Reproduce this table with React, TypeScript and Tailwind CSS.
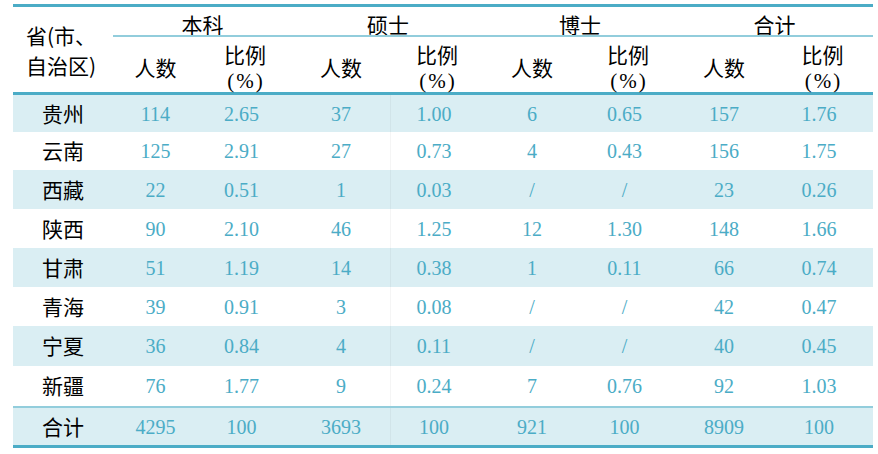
import React from "react";

const cols = "grid grid-cols-[100px_85px_94px_98px_94px_96px_96px_96px_101px]";

const rows: { name: string; v: string[]; h: string; shade: boolean }[] = [
  { name: "贵州", v: ["114", "2.65", "37", "1.00", "6", "0.65", "157", "1.76"], h: "h-[37px]", shade: true },
  { name: "云南", v: ["125", "2.91", "27", "0.73", "4", "0.43", "156", "1.75"], h: "h-[38px]", shade: false },
  { name: "西藏", v: ["22", "0.51", "1", "0.03", "/", "/", "23", "0.26"], h: "h-[39px]", shade: true },
  { name: "陕西", v: ["90", "2.10", "46", "1.25", "12", "1.30", "148", "1.66"], h: "h-[39px]", shade: false },
  { name: "甘肃", v: ["51", "1.19", "14", "0.38", "1", "0.11", "66", "0.74"], h: "h-[39px]", shade: true },
  { name: "青海", v: ["39", "0.91", "3", "0.08", "/", "/", "42", "0.47"], h: "h-[39px]", shade: false },
  { name: "宁夏", v: ["36", "0.84", "4", "0.11", "/", "/", "40", "0.45"], h: "h-[40px]", shade: true },
  { name: "新疆", v: ["76", "1.77", "9", "0.24", "7", "0.76", "92", "1.03"], h: "h-[40px]", shade: false },
];

const total = ["4295", "100", "3693", "100", "921", "100", "8909", "100"];

const cjk = "font-['Noto_Sans_CJK_SC',sans-serif]";
const num = "font-['Liberation_Serif',serif]";

function NumCell({ val, idx }: { val: string; idx: number }) {
  const ratio = idx % 2 === 1;
  const sep = idx === 3;
  return (
    <div
      className={`flex items-center justify-center text-[20px] text-[#4bacc6] ${num} ${
        ratio ? "pr-[7px]" : ""
      } ${sep ? "border-l border-l-black/[0.04]" : ""}`}
    >
      {val}
    </div>
  );
}

export default function App() {
  return (
    <div className="w-[878px] h-[454px] bg-white pt-[4px] pl-[13px]">
      <div className="w-[860px]">
        {/* header */}
        <div className={`${cols} grid-rows-[28px_2px_55px] border-t-[3px] border-t-[#4bacc6] border-b-[3px] border-b-[#4bacc6] text-black`}>
          <div className={`row-span-3 flex flex-col justify-center pl-[13px] pt-[1px] text-[21px] leading-[30px] ${cjk}`}>
            <span>省(市、</span>
            <span>自治区)</span>
          </div>
          {["本科", "硕士", "博士", "合计"].map((g) => (
            <div key={g} className={`col-span-2 flex items-center justify-center pt-[6px] text-[21px] leading-[22px] ${cjk}`}>
              {g}
            </div>
          ))}
          <div className="col-start-2 col-span-8 bg-[#92cddc]" />
          {[0, 1, 2, 3].map((i) => (
            <React.Fragment key={i}>
              <div className={`col-start-auto flex items-center justify-center pt-[7px] text-[21px] ${cjk}`}>
                人数
              </div>
              <div className="flex flex-col items-center justify-center pt-[7px] leading-[27px]">
                <span className={`text-[21px] ${cjk}`}>比例</span>
                <span className={`text-[21px] tracking-[2px] pl-[2px] ${num}`}>(%)</span>
              </div>
            </React.Fragment>
          ))}
        </div>
        {/* body */}
        {rows.map((r) => (
          <div key={r.name} className={`${cols} ${r.h} ${r.shade ? "bg-[#daeef3]" : "bg-white"}`}>
            <div className={`flex items-center justify-center text-[21px] text-black ${cjk}`}>{r.name}</div>
            {r.v.map((val, i) => (
              <NumCell key={i} val={val} idx={i} />
            ))}
          </div>
        ))}
        {/* total */}
        <div className={`${cols} h-[42px] bg-[#daeef3] border-t-2 border-t-[#92cddc] border-b-[3px] border-b-[#4bacc6]`}>
          <div className={`flex items-center justify-center text-[21px] text-black ${cjk}`}>合计</div>
          {total.map((val, i) => (
            <NumCell key={i} val={val} idx={i} />
          ))}
        </div>
      </div>
    </div>
  );
}
